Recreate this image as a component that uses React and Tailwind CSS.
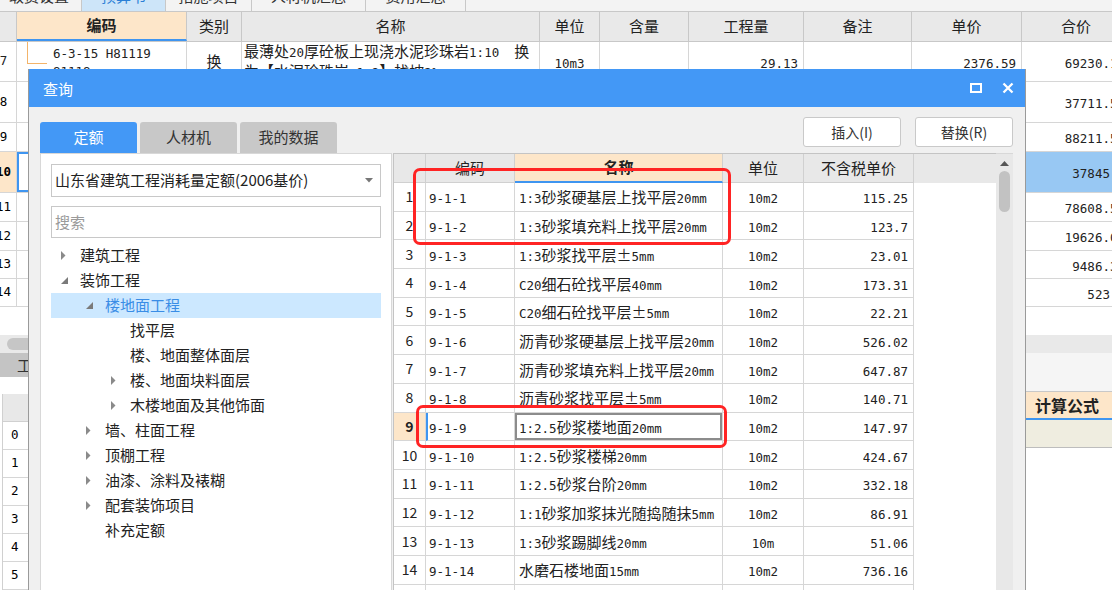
import React from 'react';

const CJK_RE = /([\u3000-\u303f\u4e00-\u9fff\uff00-\uffef±【】]+)/;

// mixed text: chinese runs in a sans, latin runs in a half-width mono
function Mixed({ text }) {
  return (
    <span>
      {text
        .split(CJK_RE)
        .filter(Boolean)
        .map((part, i) =>
          CJK_RE.test(part) ? (
            <span key={i} className="text-[15px] [font-family:'Noto_Sans_CJK_SC',sans-serif]">
              {part}
            </span>
          ) : (
            <span key={i} className="text-[12.5px] [font-family:'DejaVu_Sans_Mono',monospace]">
              {part}
            </span>
          )
        )}
    </span>
  );
}

const quotaRows = [
  ['9-1-1', '1:3砂浆硬基层上找平层20mm', '10m2', '115.25'],
  ['9-1-2', '1:3砂浆填充料上找平层20mm', '10m2', '123.7'],
  ['9-1-3', '1:3砂浆找平层±5mm', '10m2', '23.01'],
  ['9-1-4', 'C20细石砼找平层40mm', '10m2', '173.31'],
  ['9-1-5', 'C20细石砼找平层±5mm', '10m2', '22.21'],
  ['9-1-6', '沥青砂浆硬基层上找平层20mm', '10m2', '526.02'],
  ['9-1-7', '沥青砂浆填充料上找平层20mm', '10m2', '647.87'],
  ['9-1-8', '沥青砂浆找平层±5mm', '10m2', '140.71'],
  ['9-1-9', '1:2.5砂浆楼地面20mm', '10m2', '147.97'],
  ['9-1-10', '1:2.5砂浆楼梯20mm', '10m2', '424.67'],
  ['9-1-11', '1:2.5砂浆台阶20mm', '10m2', '332.18'],
  ['9-1-12', '1:1砂浆加浆抹光随捣随抹5mm', '10m2', '86.91'],
  ['9-1-13', '1:3砂浆踢脚线20mm', '10m', '51.06'],
  ['9-1-14', '水磨石楼地面15mm', '10m2', '736.16'],
  ['9-1-15', '', '', ''],
];

const treeItems = [
  { level: 0, label: '建筑工程', arrow: 'closed' },
  { level: 0, label: '装饰工程', arrow: 'open' },
  { level: 1, label: '楼地面工程', arrow: 'open', selected: true },
  { level: 2, label: '找平层' },
  { level: 2, label: '楼、地面整体面层' },
  { level: 2, label: '楼、地面块料面层', arrow: 'closed' },
  { level: 2, label: '木楼地面及其他饰面', arrow: 'closed' },
  { level: 1, label: '墙、柱面工程', arrow: 'closed' },
  { level: 1, label: '顶棚工程', arrow: 'closed' },
  { level: 1, label: '油漆、涂料及裱糊', arrow: 'closed' },
  { level: 1, label: '配套装饰项目', arrow: 'closed' },
  { level: 1, label: '补充定额' },
];

// background budget rows: number, height, total price
const bgRows = [
  { n: '8', h: 'h-[41px]', total: '37711.52' },
  { n: '9', h: 'h-[29px]', total: '88211.56' },
  { n: '10', h: 'h-[41px]', total: '37845.7', selected: true },
  { n: '11', h: 'h-[29px]', total: '78608.52' },
  { n: '12', h: 'h-[29px]', total: '19626.08' },
  { n: '13', h: 'h-[28px]', total: '9486.31' },
  { n: '14', h: 'h-[28px]', total: '523.4' },
];

const indent = ['pl-[10px]', 'pl-[35px]', 'pl-[60px]'];

function Arrow({ kind }) {
  if (kind === 'closed') {
    return (
      <svg width="5" height="9" viewBox="0 0 5 9">
        <polygon points="0,0 4.5,4.5 0,9" fill="#8a8a8a" />
      </svg>
    );
  }
  if (kind === 'open') {
    return (
      <svg width="7" height="7" viewBox="0 0 7 7">
        <polygon points="7,0 7,7 0,7" fill="#7a7a7a" />
      </svg>
    );
  }
  return null;
}

function BackgroundSheet() {
  return (
    <div className="flex flex-col h-full">
      {/* page tabs, mostly cut off at the top */}
      <div className="h-[12px] shrink-0 overflow-hidden bg-[#f3f3f3] border-b border-[#c8c8c8]">
        <div className="flex h-[30px] -mt-[19px] text-[15px] text-[#333] [font-family:'Noto_Sans_CJK_SC',sans-serif] [&>*]:shrink-0">
          <div className="w-[82px] flex items-center justify-end pr-[12px] border-r border-[#c8c8c8]">取费设置</div>
          <div className="w-[84px] flex items-center justify-center bg-[#cde5f9] text-[#2a7fd6] border-r border-[#c8c8c8]">预算书</div>
          <div className="w-[86px] flex items-center justify-center border-r border-[#c8c8c8]">措施项目</div>
          <div className="w-[114px] flex items-center justify-center border-r border-[#c8c8c8]">人材机汇总</div>
          <div className="w-[100px] flex items-center justify-center border-r border-[#c8c8c8]">费用汇总</div>
        </div>
      </div>

      {/* budget table header */}
      <div className="flex h-[30px] shrink-0 -ml-[9px] bg-[#e9e9e9] border-b border-[#c8c8c8] text-[15px] text-[#222] [font-family:'Noto_Sans_CJK_SC',sans-serif] [&>*]:shrink-0">
        <div className="w-[26px] border-r border-[#c8c8c8]" />
        <div className="w-[170px] flex items-center justify-center bg-[#fde6c9] font-bold border-r border-[#c8c8c8] border-b-2 border-b-[#3f95f0]">编码</div>
        <div className="w-[55px] flex items-center justify-center border-r border-[#c8c8c8]">类别</div>
        <div className="w-[298px] flex items-center justify-center border-r border-[#c8c8c8]">名称</div>
        <div className="w-[60px] flex items-center justify-center border-r border-[#c8c8c8]">单位</div>
        <div className="w-[89px] flex items-center justify-center border-r border-[#c8c8c8]">含量</div>
        <div className="w-[115px] flex items-center justify-center border-r border-[#c8c8c8]">工程量</div>
        <div className="w-[108px] flex items-center justify-center border-r border-[#c8c8c8]">备注</div>
        <div className="w-[110px] flex items-center justify-center border-r border-[#c8c8c8]">单价</div>
        <div className="w-[108px] flex items-center justify-center">合价</div>
      </div>

      {/* row 7 */}
      <div className="flex h-[40px] shrink-0 -ml-[9px] border-b border-[#d6d6d6] text-[#222] [&>*]:shrink-0">
        <div className="w-[26px] flex items-center justify-center border-r border-[#d6d6d6] text-[12.5px] [font-family:'DejaVu_Sans_Mono',monospace]">7</div>
        <div className="w-[170px] flex border-r border-[#d6d6d6]">
          <div className="w-[20px] h-[22px] ml-[10px] shrink-0 border-l border-b border-[#f3b46a]" />
          <div className="pl-[6px] pt-[2px] leading-[17px] whitespace-pre">
            <div><Mixed text="6-3-15 H81119" /></div>
            <div><Mixed text="81118" /></div>
          </div>
        </div>
        <div className="w-[55px] flex items-center justify-center border-r border-[#d6d6d6] text-[15px] [font-family:'Noto_Sans_CJK_SC',sans-serif]">换</div>
        <div className="w-[298px] pl-[2px] leading-[18px] whitespace-pre border-r border-[#d6d6d6]">
          <div><Mixed text="最薄处20厚砼板上现浇水泥珍珠岩1:10  换" /></div>
          <div><Mixed text="为【水泥珍珠岩 1:8】找坡2%" /></div>
        </div>
        <div className="w-[60px] flex items-center justify-center border-r border-[#d6d6d6]"><Mixed text="10m3" /></div>
        <div className="w-[89px] border-r border-[#d6d6d6]" />
        <div className="w-[115px] flex items-center justify-end pr-[5px] border-r border-[#d6d6d6]"><Mixed text="29.13" /></div>
        <div className="w-[108px] border-r border-[#d6d6d6]" />
        <div className="w-[110px] flex items-center justify-end pr-[5px] border-r border-[#d6d6d6]"><Mixed text="2376.59" /></div>
        <div className="w-[108px] flex items-center justify-end pr-[5px]"><Mixed text="69230.15" /></div>
      </div>

      {bgRows.map((r) => (
        <div
          key={r.n}
          className={`flex shrink-0 -ml-[9px] border-b border-[#d6d6d6] [&>*]:shrink-0 ${r.h} ${r.selected ? 'bg-[#98c8f3]' : ''}`}
        >
          <div
            className={
              r.selected
                ? 'w-[26px] flex items-center justify-center border-r border-[#d6d6d6] bg-[#fde6c9] font-bold text-[12.5px] [font-family:\'DejaVu_Sans_Mono\',monospace]'
                : 'w-[26px] flex items-center justify-center border-r border-[#d6d6d6] bg-white text-[12.5px] [font-family:\'DejaVu_Sans_Mono\',monospace]'
            }
          >
            {r.n}
          </div>
          <div className={r.selected ? 'w-[170px] bg-white border-2 border-[#3f95f0]' : 'w-[170px] border-r border-[#d6d6d6]'} />
          <div className="w-[55px] border-r border-[#d6d6d6]" />
          <div className="w-[298px] border-r border-[#d6d6d6]" />
          <div className="w-[60px] border-r border-[#d6d6d6]" />
          <div className="w-[89px] border-r border-[#d6d6d6]" />
          <div className="w-[115px] border-r border-[#d6d6d6]" />
          <div className="w-[108px] border-r border-[#d6d6d6]" />
          <div className="w-[110px] border-r border-[#d6d6d6]" />
          <div className="w-[108px] flex items-center justify-end pr-[5px] text-[#222]"><Mixed text={r.total} /></div>
        </div>
      ))}

      <div className="h-[28px] shrink-0" />

      {/* horizontal scroll strip */}
      <div className="h-[18px] shrink-0 bg-[#e9e9e9] flex items-center">
        <div className="ml-[7px] w-[60px] h-[12px] rounded-full bg-[#c6c6c6]" />
      </div>

      {/* lower panels */}
      <div className="flex flex-1 min-h-0">
        <div className="w-[28px] shrink-0 flex flex-col">
          <div className="h-[30px] bg-[#c4c4c4] overflow-hidden whitespace-nowrap pl-[17px] flex items-center text-[15px] text-[#333] [font-family:'Noto_Sans_CJK_SC',sans-serif]">工料机显示</div>
          <div className="h-[22px]" />
          <div className="ml-[2px] w-[26px] border-l border-[#d0d0d0] text-[12.5px] [font-family:'DejaVu_Sans_Mono',monospace]">
            <div className="h-[28px] bg-[#e8e8e8] border-b border-[#d0d0d0]" />
            {['0', '1', '2', '3', '4', '5'].map((n) => (
              <div key={n} className="h-[28px] flex items-center pl-[8px] border-b border-[#d6d6d6]">{n}</div>
            ))}
          </div>
        </div>
        <div className="flex-1" />
        <div className="w-[86px] shrink-0 flex flex-col">
          <div className="h-[39px] bg-[#f5f5f5] border-b border-[#c8c8c8]" />
          <div className="h-[28px] bg-[#fde6c9] flex items-center pl-[9px] font-bold text-[16px] text-[#222] [font-family:'Noto_Sans_CJK_SC',sans-serif] border-b-2 border-[#3f95f0]">计算公式</div>
          <div className="h-[28px] bg-[#efede0] border-b border-[#bdbdbd]" />
        </div>
      </div>
    </div>
  );
}

function QueryDialog() {
  return (
    <div className="absolute left-[28px] top-[69px] w-[998px] h-[530px] flex flex-col border-x border-[#9a9a9a] bg-[#f0f0f0] [font-family:'Noto_Sans_CJK_SC',sans-serif]">
      {/* title bar */}
      <div className="h-[38px] shrink-0 bg-[#4398f6] flex items-center pl-[14px] pr-[11px] text-white text-[15px]">
        <span className="mt-[3px]">查询</span>
        <div className="ml-auto flex items-center gap-[20px]">
          <svg width="12" height="10" viewBox="0 0 12 10">
            <rect x="1" y="1" width="10" height="8" fill="none" stroke="white" strokeWidth="2" />
          </svg>
          <svg width="12" height="12" viewBox="0 0 12 12">
            <path d="M1.5 1.5L10.5 10.5M10.5 1.5L1.5 10.5" stroke="white" strokeWidth="2.3" />
          </svg>
        </div>
      </div>

      {/* tabs + action buttons */}
      <div className="h-[46px] shrink-0 flex pl-[11px] pr-[12px]">
        <div className="flex items-end gap-[3px] text-[15px]">
          <div className="w-[97px] h-[31px] rounded-t-[3px] bg-[#4398f6] text-white flex items-center justify-center">定额</div>
          <div className="w-[97px] h-[31px] rounded-t-[3px] bg-[#c8c8c8] text-[#333] flex items-center justify-center">人材机</div>
          <div className="w-[97px] h-[31px] rounded-t-[3px] bg-[#c8c8c8] text-[#333] flex items-center justify-center">我的数据</div>
        </div>
        <div className="ml-auto mt-[10px] flex gap-[14px] text-[14px] text-[#333] self-start">
          <button className="w-[98px] h-[30px] bg-white border border-[#c9c9c9] rounded-[3px]">插入(I)</button>
          <button className="w-[98px] h-[30px] bg-white border border-[#c9c9c9] rounded-[3px]">替换(R)</button>
        </div>
      </div>

      {/* content */}
      <div className="flex flex-1 min-h-0 pl-[11px] pr-[12px]">
        {/* quota tree panel */}
        <div className="w-[352px] shrink-0 bg-white border border-[#d8d8d8] p-[10px] flex flex-col">
          <div className="h-[33px] border border-[#c8c8c8] flex items-center pl-[3px] pr-[7px] text-[15px] text-[#222]">
            <span>山东省建筑工程消耗量定额(2006基价)</span>
            <svg className="ml-auto" width="8" height="5" viewBox="0 0 8 5">
              <polygon points="0,0 8,0 4,4.5" fill="#777" />
            </svg>
          </div>
          <div className="h-[32px] mt-[9px] border border-[#c8c8c8] flex items-center pl-[3px] text-[15px] text-[#9a9a9a]">搜索</div>
          <div className="mt-[5px] flex flex-col">
            {treeItems.map((t) => (
              <div
                key={t.label}
                className={`h-[25px] flex items-center ${indent[t.level]} ${t.selected ? 'bg-[#cce8ff] text-[#3a8de6]' : 'text-[#222]'}`}
              >
                <div className="w-[19px] flex items-center">
                  <Arrow kind={t.arrow} />
                </div>
                <span className="text-[15px]">{t.label}</span>
              </div>
            ))}
          </div>
        </div>

        {/* quota table */}
        <div className="ml-[1px] w-[603px] shrink-0 bg-white border-l border-t border-[#c4c4c4] flex flex-col">
          <div className="flex h-[29px] shrink-0 bg-[#e8e8e8] text-[15px] text-[#222] [&>*]:shrink-0">
            <div className="w-[32px] border-r border-b border-[#d0d0d0]" />
            <div className="w-[89px] flex items-center justify-center border-r border-b border-[#d0d0d0]">编码</div>
            <div className="w-[208px] flex items-center justify-center bg-[#fde6c9] font-bold border-r border-[#d0d0d0] border-b-2 border-b-[#3f95f0]">名称</div>
            <div className="w-[81px] flex items-center justify-center border-r border-b border-[#d0d0d0]">单位</div>
            <div className="w-[110px] flex items-center justify-center border-r border-b border-[#d0d0d0]">不含税单价</div>
          </div>
          {quotaRows.map((row, i) => {
            const idx = i + 1;
            const sel = idx === 9;
            return (
              <div key={row[0]} className="flex h-[28.7px] shrink-0 text-[#222] [&>*]:shrink-0">
                <div
                  className={
                    sel
                      ? 'w-[32px] flex items-center justify-center border-r border-b border-[#d6d6d6] bg-[#fde6c9] font-bold text-[14px] [font-family:\'Liberation_Serif\',serif]'
                      : 'w-[32px] flex items-center justify-center border-r border-b border-[#d6d6d6] text-[14px] [font-family:\'Liberation_Serif\',serif]'
                  }
                >
                  {idx}
                </div>
                <div
                  className={
                    sel
                      ? 'w-[89px] flex items-center pl-[1px] border-l-2 border-l-[#3f95f0] border-r border-b border-[#d6d6d6] whitespace-pre'
                      : 'w-[89px] flex items-center pl-[3px] border-r border-b border-[#d6d6d6] whitespace-pre'
                  }
                >
                  <Mixed text={row[0]} />
                </div>
                <div
                  className={
                    sel
                      ? 'w-[208px] flex items-center pl-[4px] border-r border-b border-[#d6d6d6] shadow-[inset_0_0_0_2px_#8c8c8c] whitespace-pre'
                      : 'w-[208px] flex items-center pl-[4px] border-r border-b border-[#d6d6d6] whitespace-pre'
                  }
                >
                  <Mixed text={row[1]} />
                </div>
                <div className="w-[81px] flex items-center justify-center border-r border-b border-[#d6d6d6]">
                  <Mixed text={row[2]} />
                </div>
                <div className="w-[110px] flex items-center justify-end pr-[5px] border-r border-b border-[#d6d6d6]">
                  <Mixed text={row[3]} />
                </div>
              </div>
            );
          })}
        </div>

        {/* vertical scrollbar */}
        <div className="w-[17px] shrink-0 bg-[#e8e8e8] border-t border-[#d8d8d8] flex flex-col items-center">
          <svg className="mt-[7px]" width="9" height="5" viewBox="0 0 9 5">
            <polygon points="0,5 9,5 4.5,0" fill="#555" />
          </svg>
          <div className="mt-[5px] w-[11px] h-[41px] rounded-full bg-[#c2c2c2]" />
        </div>
      </div>
    </div>
  );
}

export default function App() {
  return (
    <div className="relative w-[1112px] h-[590px] overflow-hidden bg-white">
      <BackgroundSheet />
      <QueryDialog />

      {/* red annotation boxes */}
      <div className="absolute left-[413px] top-[168px] w-[318px] h-[77px] border-[3px] border-[#ff2424] rounded-[7px]" />
      <div className="absolute left-[416px] top-[405px] w-[311px] h-[43px] border-[3px] border-[#ff2424] rounded-[7px]" />
    </div>
  );
}
